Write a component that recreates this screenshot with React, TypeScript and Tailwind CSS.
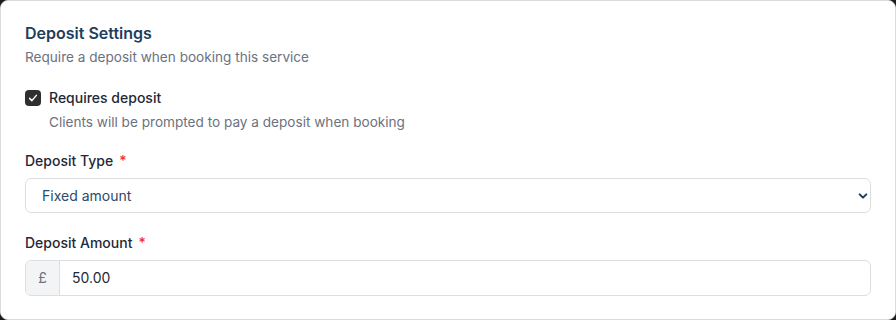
import React, { useState } from 'react';

function Required() {
  return <span className="ml-1.5 text-red-500">*</span>;
}

export default function App() {
  const [requires, setRequires] = useState(true);
  const [type, setType] = useState('fixed');
  const [amount, setAmount] = useState('50.00');

  return (
    <div className="h-[320px] w-[896px] bg-[#1c1c1e]" style={{ fontFamily: 'Inter, "Noto Sans", sans-serif' }}>
      <div className="h-full rounded-lg border border-[#dcdcdc] bg-white px-6 pt-[20px]">
        {/* Header */}
        <h3 className="text-base font-semibold leading-6 text-[#1f3d5c]">Deposit Settings</h3>
        <p className="mt-[2px] text-[13.6px] leading-5 text-[#6b7280]">Require a deposit when booking this service</p>

        {/* Checkbox */}
        <div className="mt-[21px] flex gap-2">
          <button
            onClick={() => setRequires(!requires)}
            className={`mt-[2px] flex h-4 w-4 shrink-0 items-center justify-center rounded-[4px] ${requires ? 'bg-[#2f2f2f]' : 'border border-gray-300 bg-white'}`}
          >
            {requires && (
              <svg viewBox="0 0 16 16" className="h-3 w-3" fill="none" stroke="white" strokeWidth="2" strokeLinecap="round" strokeLinejoin="round">
                <path d="M3.5 8.5l3 3 6-7" />
              </svg>
            )}
          </button>
          <div>
            <div className="text-sm font-medium leading-5 text-[#1f2937]">Requires deposit</div>
            <div className="mt-1 text-[13.6px] leading-5 text-[#6b7280]">Clients will be prompted to pay a deposit when booking</div>
          </div>
        </div>

        {/* Deposit type */}
        <label className="mt-[19px] block text-sm font-medium leading-5 text-[#1f2937]">
          Deposit Type<Required />
        </label>
        <div className="relative mt-[7px]">
          <select
            value={type}
            onChange={(e) => setType(e.target.value)}
            className="h-[35px] w-full appearance-none rounded-md border border-[#dedede] bg-white pl-4 pr-8 text-sm text-[#2c4a6b] outline-none"
          >
            <option value="fixed">Fixed amount</option>
            <option value="percent">Percentage</option>
          </select>
          <svg viewBox="0 0 12 12" className="pointer-events-none absolute right-[3px] top-[13px] h-[10px] w-[10px]" fill="none" stroke="#1f3d5c" strokeWidth="2.4" strokeLinecap="round" strokeLinejoin="round">
            <path d="M2 4l4 4 4-4" />
          </svg>
        </div>

        {/* Deposit amount */}
        <label className="mt-[20px] block text-sm font-medium leading-5 text-[#1f2937]">
          Deposit Amount<Required />
        </label>
        <div className="mt-[7px] flex h-[36px] overflow-hidden rounded-md border border-[#dedede]">
          <span className="flex w-[34px] items-center justify-center border-r border-[#dedede] bg-[#f3f4f6] text-sm text-[#6b7280]">£</span>
          <input
            value={amount}
            onChange={(e) => setAmount(e.target.value)}
            className="flex-1 px-3 text-sm text-[#1f2937] outline-none"
          />
        </div>
      </div>
    </div>
  );
}
